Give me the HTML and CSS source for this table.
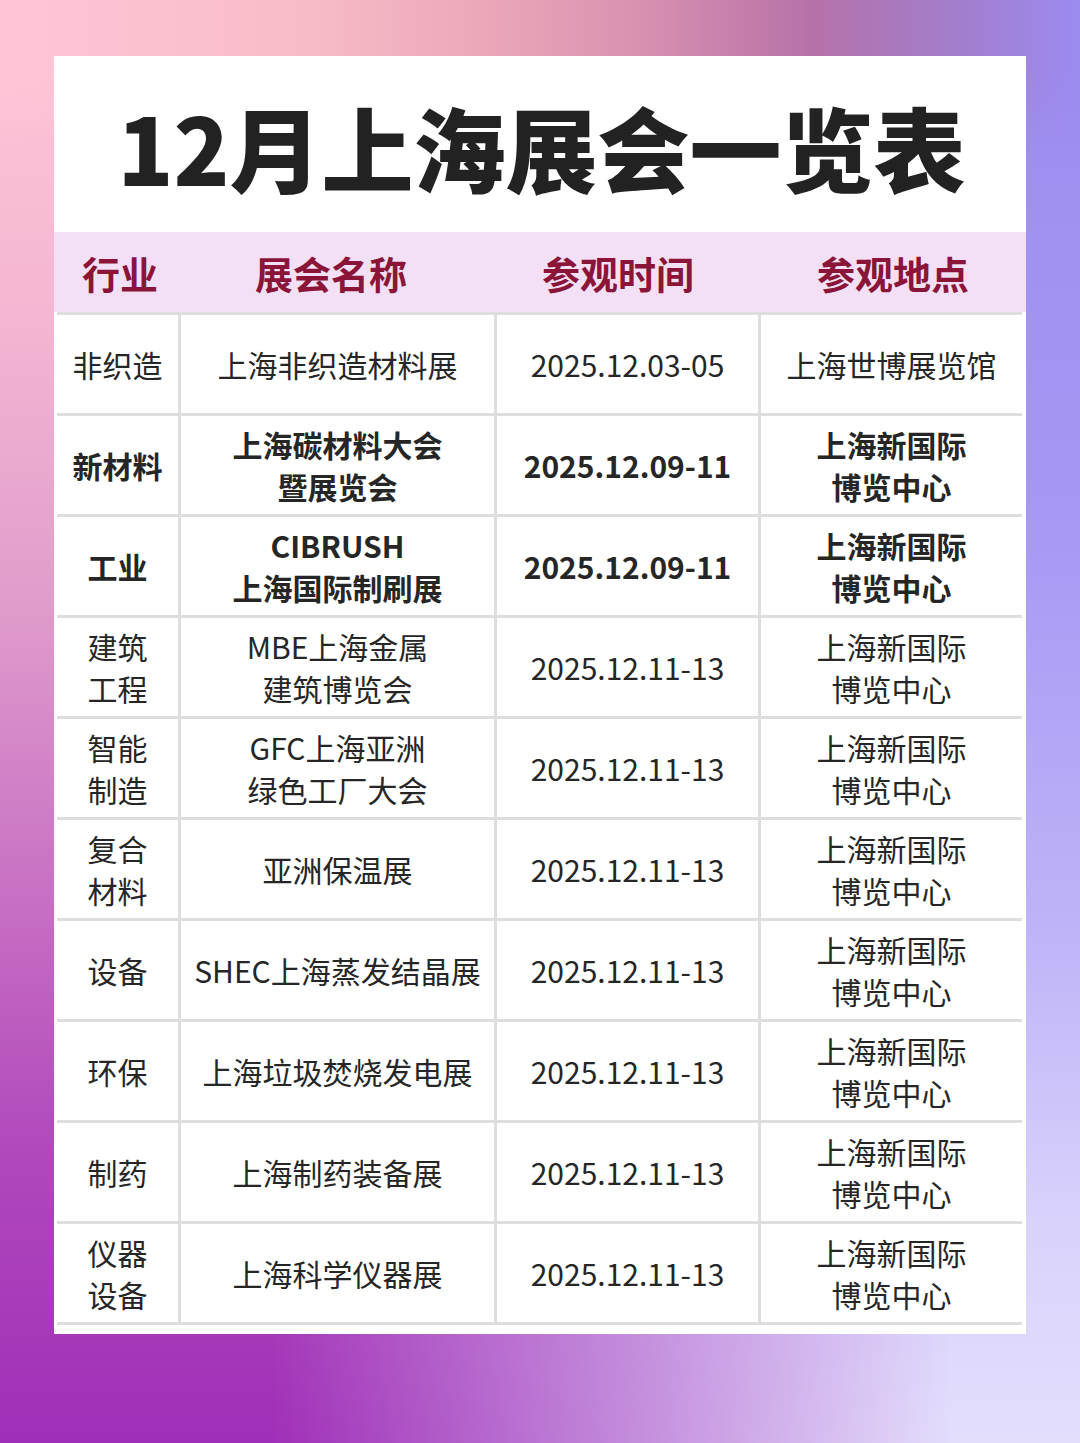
FILE: index.html
```html
<!DOCTYPE html>
<html lang="zh-CN">
<head>
<meta charset="utf-8">
<title>12月上海展会一览表</title>
<link rel="stylesheet" href="styles.css">
</head>
<body>
<div class="page">
  <div class="card">
    <h1 class="title">12月上海展会一览表</h1>
    <div class="thead">
      <div class="th">行业</div>
      <div class="th">展会名称</div>
      <div class="th">参观时间</div>
      <div class="th">参观地点</div>
    </div>
    <div class="tbody">
      <div class="td">非织造</div>
      <div class="td">上海非织造材料展</div>
      <div class="td">2025.12.03-05</div>
      <div class="td">上海世博展览馆</div>

      <div class="td b">新材料</div>
      <div class="td b">上海碳材料大会<br>暨展览会</div>
      <div class="td b">2025.12.09-11</div>
      <div class="td b">上海新国际<br>博览中心</div>

      <div class="td b">工业</div>
      <div class="td b">CIBRUSH<br>上海国际制刷展</div>
      <div class="td b">2025.12.09-11</div>
      <div class="td b">上海新国际<br>博览中心</div>

      <div class="td">建筑<br>工程</div>
      <div class="td">MBE上海金属<br>建筑博览会</div>
      <div class="td">2025.12.11-13</div>
      <div class="td">上海新国际<br>博览中心</div>

      <div class="td">智能<br>制造</div>
      <div class="td">GFC上海亚洲<br>绿色工厂大会</div>
      <div class="td">2025.12.11-13</div>
      <div class="td">上海新国际<br>博览中心</div>

      <div class="td">复合<br>材料</div>
      <div class="td">亚洲保温展</div>
      <div class="td">2025.12.11-13</div>
      <div class="td">上海新国际<br>博览中心</div>

      <div class="td">设备</div>
      <div class="td">SHEC上海蒸发结晶展</div>
      <div class="td">2025.12.11-13</div>
      <div class="td">上海新国际<br>博览中心</div>

      <div class="td">环保</div>
      <div class="td">上海垃圾焚烧发电展</div>
      <div class="td">2025.12.11-13</div>
      <div class="td">上海新国际<br>博览中心</div>

      <div class="td">制药</div>
      <div class="td">上海制药装备展</div>
      <div class="td">2025.12.11-13</div>
      <div class="td">上海新国际<br>博览中心</div>

      <div class="td">仪器<br>设备</div>
      <div class="td">上海科学仪器展</div>
      <div class="td">2025.12.11-13</div>
      <div class="td">上海新国际<br>博览中心</div>
    </div>
  </div>
</div>
</body>
</html>
```

FILE: styles.css
```css
* { box-sizing: border-box; }
html, body { margin: 0; padding: 0; }
body {
  font-family: "Noto Sans CJK SC", "Noto Sans", sans-serif;
  color: #262626;
}
.page {
  position: relative;
  width: 1080px;
  height: 1443px;
  overflow: hidden;
  padding: 56px 54px 0 54px;
  background: linear-gradient(180deg, #ffc6d7 0%, #f4b6d2 22%, #e09ccc 42%, #c870c4 62%, #b048bc 80%, #a02fb8 100%);
}
.page::before {
  content: "";
  position: absolute;
  inset: 0;
  background: linear-gradient(180deg, #9c8bf0 0%, #a697f4 35%, #bfb4f8 65%, #d9d3fc 85%, #e3defc 100%);
  -webkit-mask-image: linear-gradient(90deg, transparent 25%, #000 88%);
  mask-image: linear-gradient(90deg, transparent 25%, #000 88%);
}
.page::after {
  content: "";
  position: absolute;
  left: 0;
  right: 0;
  top: 0;
  height: 150px;
  background: linear-gradient(90deg, #ffc6d7 0%, #f8bcc8 28%, #eaa6b8 46%, #d890b0 60%, #b672a8 75%, #a47cc8 87%, #9c8bf0 100%);
  -webkit-mask-image: linear-gradient(180deg, #000 45%, transparent 100%);
  mask-image: linear-gradient(180deg, #000 45%, transparent 100%);
}
.card {
  position: relative;
  z-index: 1;
  width: 972px;
  background: #fff;
  padding-bottom: 9px;
}
.title {
  margin: 0;
  height: 176px;
  display: flex;
  align-items: center;
  justify-content: center;
  font-size: 92px;
  font-weight: 900;
  letter-spacing: 0;
  color: #222;
  padding-top: 2px;
  padding-left: 3px;
}
.thead {
  display: grid;
  grid-template-columns: 132px 290px 284px 266px;
  height: 80px;
  background: #f3e0f6;
}
.th {
  display: flex;
  align-items: center;
  justify-content: center;
  font-size: 38px;
  font-weight: 700;
  color: #8a1538;
}
.tbody {
  display: grid;
  grid-template-columns: 121px 313px 261px 261px;
  grid-auto-rows: 98px;
  gap: 3px;
  margin: 0 4px 0 3px;
  padding: 3px 0;
  background: #dedede;
}
.td {
  background: #fff;
  display: flex;
  align-items: center;
  justify-content: center;
  text-align: center;
  font-size: 30px;
  line-height: 42px;
  color: #262626;
}
.td.b {
  font-weight: 700;
}
```
